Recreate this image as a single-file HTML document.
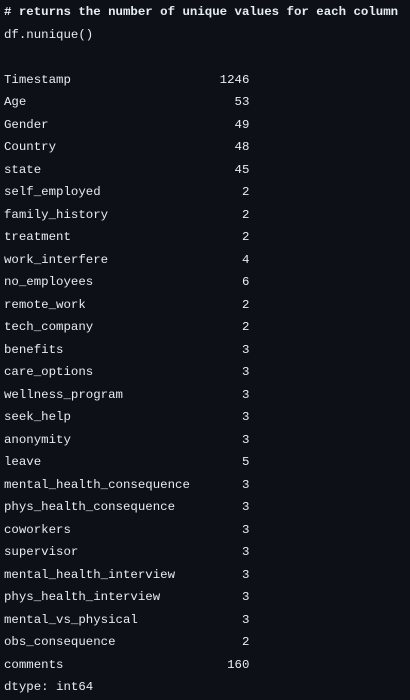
<!DOCTYPE html>
<html><head><meta charset="utf-8"><style>
html,body{margin:0;padding:0;background:#0d1117;width:410px;height:700px;overflow:hidden}
pre{margin:0;padding:1px 0 0 4px;font-family:"Liberation Mono",monospace;font-size:12.4px;line-height:22.5px;color:#e6edf3;white-space:pre}
b{font-weight:bold}
</style></head><body><pre><b># returns the number of unique values for each column</b>
df.nunique()

Timestamp                    1246
Age                            53
Gender                         49
Country                        48
state                          45
self_employed                   2
family_history                  2
treatment                       2
work_interfere                  4
no_employees                    6
remote_work                     2
tech_company                    2
benefits                        3
care_options                    3
wellness_program                3
seek_help                       3
anonymity                       3
leave                           5
mental_health_consequence       3
phys_health_consequence         3
coworkers                       3
supervisor                      3
mental_health_interview         3
phys_health_interview           3
mental_vs_physical              3
obs_consequence                 2
comments                      160
dtype: int64</pre></body></html>
